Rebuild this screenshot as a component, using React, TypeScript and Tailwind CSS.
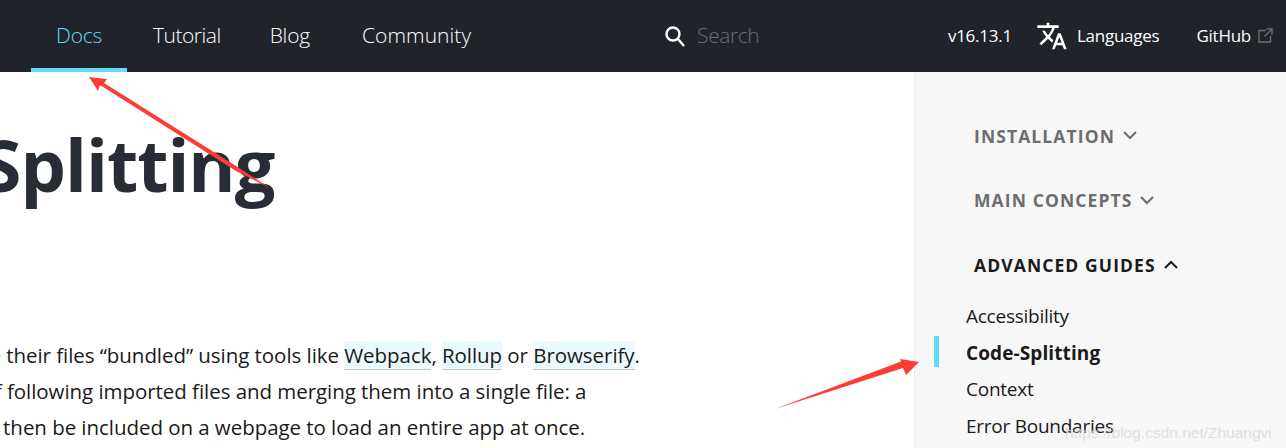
import type { ReactNode } from 'react';

const font = { sans: 'font-["Open_Sans","Noto_Sans",sans-serif]' };

function NavLink({ label, active, className = '' }: { label: string; active?: boolean; className?: string }) {
  return (
    <a
      href="#"
      className={`flex h-full items-center px-[25px] text-[21px] font-light ${active ? 'border-b-4 border-[#61dafb] pt-1 text-[#61dafb]' : 'text-white'} ${className}`}
    >
      {label}
    </a>
  );
}

function Hl({ children }: { children: ReactNode }) {
  return <a href="#" className="border-b border-black/20 bg-[#bbeffd]/30">{children}</a>;
}

function Section({ label, open }: { label: string; open?: boolean }) {
  return (
    <div className={`flex h-[64.5px] items-center gap-[8px] pl-[59px] text-[17.5px] font-bold tracking-[1.1px] ${open ? 'text-[#1a1a1a]' : 'text-[#6d6d6d]'}`}>
      {label}
      <svg width="14" height="9" viewBox="0 0 14 9" fill="none" stroke="currentColor" strokeWidth="2">
        <path d={open ? 'M1 8L7 2l6 6' : 'M1 1l6 6 6-6'} />
      </svg>
    </div>
  );
}

function SideLink({ label, active }: { label: string; active?: boolean }) {
  return (
    <li className={`relative flex h-[36.7px] items-center pl-[51px] text-[19px] text-[#1a1a1a] ${active ? 'font-bold tracking-[0.1px]' : 'tracking-[-0.25px]'}`}>
      {active && <span className="absolute left-[19px] top-[1px] h-[31px] w-[5px] bg-[#61dafb]" />}
      {label}
    </li>
  );
}

export default function App() {
  return (
    <div className={`relative flex h-[448px] w-[1286px] flex-col overflow-hidden bg-white ${font.sans}`}>
      <header className="flex h-[72px] shrink-0 items-center bg-[#20232a] text-white">
        <nav className="ml-[31px] flex h-full">
          <NavLink label="Docs" active className="tracking-[-0.2px]" />
          <NavLink label="Tutorial" className="tracking-[-0.5px] ml-px" />
          <NavLink label="Blog" className="tracking-[-0.2px] ml-[-1px]" />
          <NavLink label="Community" className="tracking-[0.05px] ml-[2px]" />
        </nav>
        <div className="ml-[168px] flex items-center gap-[11px]">
          <svg width="22" height="22" viewBox="0 0 22 22" fill="none" stroke="currentColor" strokeWidth="2.4">
            <circle cx="9" cy="9" r="6.5" />
            <path d="M14 14l6 7" />
          </svg>
          <span className="text-[21px] font-light tracking-[-0.4px] text-[#6d6d6d]">Search</span>
        </div>
        <div className="ml-auto flex items-center pr-[13px] text-[17px] tracking-[-0.25px]">
          <span>v16.13.1</span>
          <svg className="ml-[24px]" width="32" height="32" viewBox="0 0 24 24" fill="currentColor">
            <path d="M12.87 15.07l-2.54-2.51.03-.03c1.74-1.94 2.98-4.17 3.71-6.53H17V4h-7V2H8v2H1v1.99h11.17C11.5 7.92 10.44 9.75 9 11.35 8.07 10.32 7.3 9.19 6.69 8h-2c.73 1.63 1.73 3.17 2.98 4.56l-5.09 5.02L4 19l5-5 3.11 3.11.76-2.04zM18.5 10h-2L12 22h2l1.12-3h4.75L21 22h2l-4.5-12zm-2.62 7l1.62-4.33L19.12 17h-3.24z" />
          </svg>
          <span className="ml-[9px]">Languages</span>
          <span className="ml-[37px]">GitHub</span>
          <svg className="ml-[6px]" width="16" height="16" viewBox="0 0 16 16" fill="none" stroke="#6d6d6d" strokeWidth="1.4">
            <path d="M9 2.5H2v11.5h11.5V8M9.5 1h5.5v5.5M15 1L7.5 8.5" />
          </svg>
        </div>
      </header>

      <div className="flex min-h-0 flex-1">
        <main className="min-w-0 flex-1 overflow-hidden">
          <h1 className="mt-[52px] ml-[-215px] whitespace-nowrap text-[72px] font-bold leading-[80px] tracking-[-1px] text-[#282c34]">
            Code-Splitting
          </h1>
          <div className="mt-[133px] ml-[-243px] whitespace-nowrap text-[20.5px] leading-[36px] tracking-[-0.05px] text-[#1a1a1a]">
            <p>Most React apps will have their files “bundled” using tools like <Hl>Webpack</Hl>, <Hl>Rollup</Hl> or <Hl>Browserify</Hl>.</p>
            <p>Bundling is the process of following imported files and merging them into a single file: a</p>
            <p>“bundle”. This bundle can then be included on a webpage to load an entire app at once.</p>
          </div>
        </main>
        <aside className="w-[372px] shrink-0 border-l border-[#ececec] bg-[#f7f7f7] pt-[31.5px]">
          <Section label="INSTALLATION" />
          <Section label="MAIN CONCEPTS" />
          <Section label="ADVANCED GUIDES" open />
          <ul className="mt-[1px]">
            <SideLink label="Accessibility" />
            <SideLink label="Code-Splitting" active />
            <SideLink label="Context" />
            <SideLink label="Error Boundaries" />
          </ul>
        </aside>
      </div>

      {/* annotation arrows drawn over the screenshot */}
      <svg className="pointer-events-none absolute left-0 top-0" width="1286" height="448" fill="#ff3b36">
        <polygon points="89,77 107,79 104,83 240,168.5 270,188 236,171 100,85 98,91" />
        <polygon points="919,362 900,359 901,361.5 775,409 903,368 906,375" />
      </svg>
      <span className='pointer-events-none absolute left-[1065px] top-[421px] whitespace-nowrap font-["Liberation_Sans",sans-serif] text-[15.5px] text-[#d8d8d8]/80'>
        https://blog.csdn.net/Zhuangvi
      </span>
    </div>
  );
}
